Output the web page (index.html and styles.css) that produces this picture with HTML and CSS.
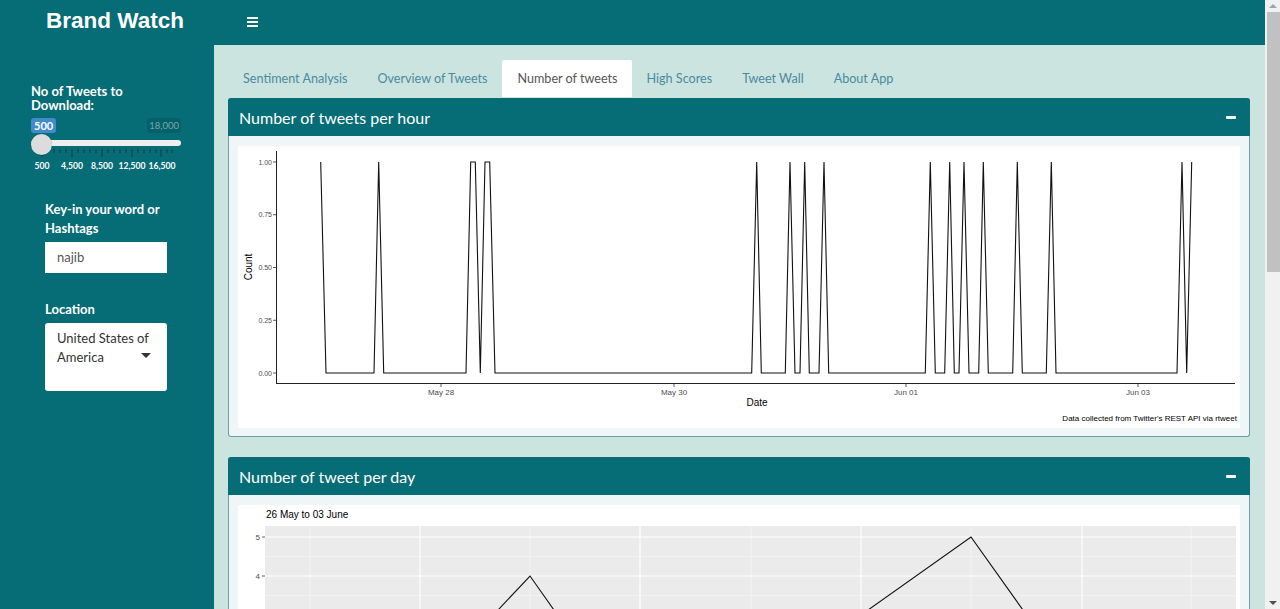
FILE: index.html
```html
<!DOCTYPE html>
<html lang="en">
<head>
<meta charset="utf-8">
<title>Brand Watch</title>
<link rel="stylesheet" href="styles.css">
</head>
<body>
<div class="window">
  <div class="page">
    <header class="topbar">
      <div class="logo">Brand Watch</div>
      <a class="sidebar-toggle" href="#">
        <svg width="11" height="10" viewBox="0 0 11 10"><rect x="0" y="0" width="11" height="2"/><rect x="0" y="4" width="11" height="2"/><rect x="0" y="8" width="11" height="2"/></svg>
      </a>
    </header>
    <div class="body-row">
      <aside class="sidebar">
        <div class="slider-group">
          <div class="ctl-label narrow">No of Tweets to Download:</div>
          <div class="irs">
            <div class="irs-labels">
              <span class="irs-from">500</span>
              <span class="irs-max">18,000</span>
            </div>
            <div class="irs-bar">
              <span class="irs-line"></span>
              <span class="irs-handle"></span>
            </div>
            <svg class="irs-grid" width="150" height="9" viewBox="0 0 150 9">
              <g class="major">
                <rect x="10.5" y="0" width="1" height="8"/><rect x="40.5" y="0" width="1" height="8"/><rect x="70.5" y="0" width="1" height="8"/><rect x="100.5" y="0" width="1" height="8"/><rect x="129.5" y="0" width="1" height="8"/>
              </g>
              <g class="minor">
                <rect x="16.5" y="0" width="1" height="4"/><rect x="22.5" y="0" width="1" height="4"/><rect x="28.5" y="0" width="1" height="4"/><rect x="34.5" y="0" width="1" height="4"/>
                <rect x="46.5" y="0" width="1" height="4"/><rect x="52.5" y="0" width="1" height="4"/><rect x="58.5" y="0" width="1" height="4"/><rect x="64.5" y="0" width="1" height="4"/>
                <rect x="76.5" y="0" width="1" height="4"/><rect x="82.5" y="0" width="1" height="4"/><rect x="88.5" y="0" width="1" height="4"/><rect x="94.5" y="0" width="1" height="4"/>
                <rect x="106.5" y="0" width="1" height="4"/><rect x="112.5" y="0" width="1" height="4"/><rect x="118.5" y="0" width="1" height="4"/><rect x="124.5" y="0" width="1" height="4"/>
                <rect x="135.5" y="0" width="1" height="4"/><rect x="140.5" y="0" width="1" height="4"/>
              </g>
            </svg>
            <div class="irs-grid-text">
              <span>500</span><span>4,500</span><span>8,500</span><span>12,500</span><span>16,500</span>
            </div>
          </div>
        </div>

        <div class="form-group word-group">
          <div class="ctl-label">Key-in your word or Hashtags</div>
          <div class="text-input">najib</div>
        </div>

        <div class="form-group location-group">
          <div class="ctl-label">Location</div>
          <div class="select-box">
            <span class="select-text">United States of America</span>
            <span class="caret"></span>
          </div>
        </div>
      </aside>

      <main class="content">
        <nav class="tabs">
          <a class="tab">Sentiment Analysis</a>
          <a class="tab">Overview of Tweets</a>
          <a class="tab active">Number of tweets</a>
          <a class="tab">High Scores</a>
          <a class="tab">Tweet Wall</a>
          <a class="tab">About App</a>
        </nav>

        <section class="box first">
          <div class="box-header">
            <h3 class="box-title">Number of tweets per hour</h3>
            <span class="box-tool"></span>
          </div>
          <div class="box-body">
            <div class="plot plot-hour">
              <svg width="1002" height="282" viewBox="0 0 1002 282" class="chart">
                <line x1="38.5" y1="5" x2="38.5" y2="237.5" class="axis"/>
                <line x1="38" y1="237.5" x2="997" y2="237.5" class="axis"/>
                <g class="yticks">
                  <line x1="35" y1="16" x2="38" y2="16"/><line x1="35" y1="68.75" x2="38" y2="68.75"/><line x1="35" y1="121.5" x2="38" y2="121.5"/><line x1="35" y1="174.25" x2="38" y2="174.25"/><line x1="35" y1="227" x2="38" y2="227"/>
                </g>
                <g class="ylabels">
                  <text x="34" y="18.5">1.00</text>
                  <text x="34" y="71.2">0.75</text>
                  <text x="34" y="124">0.50</text>
                  <text x="34" y="176.7">0.25</text>
                  <text x="34" y="229.5">0.00</text>
                </g>
                <g class="xticks">
                  <line x1="203" y1="238" x2="203" y2="241"/><line x1="436" y1="238" x2="436" y2="241"/><line x1="668" y1="238" x2="668" y2="241"/><line x1="900" y1="238" x2="900" y2="241"/>
                </g>
                <g class="xlabels">
                  <text x="203" y="248.5">May 28</text>
                  <text x="436" y="248.5">May 30</text>
                  <text x="668" y="248.5">Jun 01</text>
                  <text x="900" y="248.5">Jun 03</text>
                </g>
                <text class="axis-title" x="519" y="260">Date</text>
                <text class="axis-title" transform="translate(13.5 121) rotate(-90)">Count</text>
                <text class="caption" x="999" y="275">Data collected from Twitter's REST API via rtweet</text>
                <polyline class="series" points="82.7,16 88,227 136,227 140.7,16 145.7,227 228,227 232.7,16 237.3,16 242.3,227 247,16 251.7,16 257,227 513.7,227 518.7,16 523.3,227 547.3,227 552,16 557,227 562,227 566.7,16 571.3,227 581,227 586,16 590.7,227 687.3,227 692.3,16 697.3,227 706.7,227 711.7,16 716.3,227 721,227 726,16 731,227 740.7,227 745.3,16 750.3,227 774.7,227 779.3,16 784.3,227 808.3,227 813.3,16 818,227 939,227 944,16 948.7,227 953.7,16"/>
              </svg>
            </div>
          </div>
        </section>

        <section class="box second">
          <div class="box-header">
            <h3 class="box-title">Number of tweet per day</h3>
            <span class="box-tool"></span>
          </div>
          <div class="box-body">
            <div class="plot plot-day">
              <svg width="1002" height="300" viewBox="0 0 1002 300" class="chart">
                <text class="plot-title" x="28" y="13">26 May to 03 June</text>
                <rect x="27" y="21" width="971" height="260" class="panel"/>
                <g class="grid-minor">
                  <line x1="27" y1="51.5" x2="998" y2="51.5"/><line x1="27" y1="90.5" x2="998" y2="90.5"/><line x1="27" y1="129.5" x2="998" y2="129.5"/><line x1="27" y1="168.5" x2="998" y2="168.5"/>
                  <line x1="72" y1="21" x2="72" y2="281"/><line x1="292" y1="21" x2="292" y2="281"/><line x1="513" y1="21" x2="513" y2="281"/><line x1="733" y1="21" x2="733" y2="281"/><line x1="953" y1="21" x2="953" y2="281"/>
                </g>
                <g class="grid-major">
                  <line x1="27" y1="32" x2="998" y2="32"/><line x1="27" y1="71" x2="998" y2="71"/><line x1="27" y1="110" x2="998" y2="110"/><line x1="27" y1="149" x2="998" y2="149"/><line x1="27" y1="188" x2="998" y2="188"/>
                  <line x1="182" y1="21" x2="182" y2="281"/><line x1="402" y1="21" x2="402" y2="281"/><line x1="623" y1="21" x2="623" y2="281"/><line x1="844" y1="21" x2="844" y2="281"/>
                </g>
                <g class="yticks">
                  <line x1="24" y1="32" x2="27" y2="32"/><line x1="24" y1="71" x2="27" y2="71"/><line x1="24" y1="110" x2="27" y2="110"/><line x1="24" y1="149" x2="27" y2="149"/><line x1="24" y1="188" x2="27" y2="188"/>
                </g>
                <g class="ylabels">
                  <text x="22" y="35">5</text>
                  <text x="22" y="74">4</text>
                </g>
                <polyline class="series" points="72,149 182,188 292,71 402,227 513,188 623,110 733,32 844,188 953,149"/>
              </svg>
            </div>
          </div>
        </section>
      </main>
    </div>
  </div>
  <div class="scrollbar">
    <span class="sb-arrow up"></span>
    <span class="sb-thumb"></span>
    <span class="sb-track"></span>
    <span class="sb-arrow down"></span>
  </div>
</div>
</body>
</html>
```

FILE: styles.css
```css
* { box-sizing: border-box; }

html, body {
  margin: 0;
  height: 609px;
  overflow: hidden;
}

body {
  font-family: Lato, "Noto Sans", sans-serif;
  background: #cce4e0;
  color: #333;
}

.window {
  display: flex;
  height: 609px;
}

.page {
  flex: 1;
  min-width: 0;
  display: flex;
  flex-direction: column;
}

/* ---------- top bar ---------- */
.topbar {
  flex: none;
  height: 45px;
  background: #066c75;
  display: flex;
  align-items: center;
}

.logo {
  width: 230px;
  text-align: center;
  font-family: "Liberation Sans", Arial, sans-serif;
  font-weight: bold;
  font-size: 22.5px;
  color: #fff;
  padding-bottom: 3px;
}

.sidebar-toggle {
  display: flex;
  margin-left: 17px;
  margin-bottom: 2px;
}

.sidebar-toggle svg { fill: #fff; }

/* ---------- body row ---------- */
.body-row {
  flex: 1;
  display: flex;
  min-height: 0;
}

.sidebar {
  flex: none;
  width: 214px;
  background: #066c75;
  color: #fff;
}

.ctl-label {
  font-weight: bold;
  font-size: 13px;
  line-height: 19px;
  color: #fff;
}

.slider-group {
  margin-left: 31px;
  width: 150px;
  padding-top: 39px;
}

.slider-group .ctl-label {
  line-height: 14px;
  max-width: 122px;
}

/* slider */
.irs {
  margin-top: 6px;
  width: 150px;
}

.irs-labels {
  display: flex;
  justify-content: space-between;
  height: 15px;
}

.irs-from {
  background: #428bca;
  color: #fff;
  font-size: 11px;
  font-weight: bold;
  line-height: 15px;
  padding: 0 3px;
  border-radius: 3px;
}

.irs-max {
  background: rgba(0, 0, 0, 0.1);
  color: rgba(255, 255, 255, 0.45);
  font-size: 9.5px;
  line-height: 15px;
  padding: 0 2px;
  border-radius: 3px;
}

.irs-bar {
  position: relative;
  height: 16px;
  display: flex;
  align-items: center;
}

.irs-line {
  display: block;
  width: 100%;
  height: 6px;
  margin-top: 4px;
  border-radius: 3px;
  background: #eeeeee;
}

.irs-handle {
  position: absolute;
  left: 0;
  top: 1px;
  width: 21px;
  height: 21px;
  border-radius: 50%;
  background: #dcdcdc;
  box-shadow: 0 0 1px rgba(0, 0, 0, 0.3);
}

.irs-grid {
  display: block;
}

.irs-grid rect { fill: #1d3a3e; }

.irs-grid-text {
  display: grid;
  grid-template-columns: repeat(5, 30px);
  margin-left: -4px;
  margin-top: 3px;
}

.irs-grid-text span {
  display: flex;
  justify-content: center;
  font-size: 8.6px;
  font-weight: bold;
  line-height: 10px;
  color: #fff;
  white-space: nowrap;
}

/* inputs */
.form-group {
  margin-left: 45px;
  width: 122px;
}

.word-group { margin-top: 29px; }

.text-input {
  margin-top: 4px;
  height: 31px;
  background: #fff;
  color: #555;
  font-size: 13px;
  line-height: 31px;
  padding-left: 12px;
}

.location-group { margin-top: 27px; }

.select-box {
  margin-top: 4px;
  height: 68px;
  background: #fff;
  border-radius: 3px;
  padding: 6px 0 0 12px;
  position: relative;
}

.select-text {
  display: block;
  width: 96px;
  font-size: 13px;
  line-height: 19px;
  color: #333;
}

.caret {
  position: absolute;
  left: 96px;
  top: 30px;
  width: 0;
  height: 0;
  border-left: 5px solid transparent;
  border-right: 5px solid transparent;
  border-top: 5px solid #333;
}

/* ---------- content ---------- */
.content {
  flex: 1;
  min-width: 0;
  background: #cce4e0;
  padding: 15px 15px 0 14px;
}

.tabs {
  display: flex;
  height: 38px;
}

.tab {
  display: flex;
  align-items: center;
  padding: 0 15px;
  height: 37px;
  font-size: 12.6px;
  color: #4a8b9d;
  cursor: pointer;
}

.tab.active {
  background: #fff;
  color: #555;
  padding-right: 14px;
  border-radius: 2px 2px 0 0;
}

.box {
  background: #eef6f8;
  border: 1px solid #6f9ea8;
  border-top: 0;
  border-radius: 3px;
}

.box.second { margin-top: 20px; }

.box-header {
  height: 38px;
  background: #066c75;
  margin: 0 -1px;
  border-radius: 3px 3px 0 0;
  display: flex;
  align-items: center;
  justify-content: space-between;
  padding: 0 14px 0 11px;
}

.box-title {
  margin: 0;
  font-size: 16px;
  font-weight: normal;
  color: #fff;
}

.box-tool {
  width: 10px;
  height: 3px;
  background: #fff;
  border-radius: 1px;
}

.box-body {
  padding: 10px 9px 8px 9px;
}

.plot {
  background: #fff;
  line-height: 0;
}

.chart {
  display: block;
  font-family: "Liberation Sans", Arial, sans-serif;
}

.chart .axis { stroke: #222; stroke-width: 1; }
.chart .yticks line, .chart .xticks line { stroke: #333; stroke-width: 0.8; }

.chart .ylabels text {
  font-size: 7px;
  fill: #4d4d4d;
  text-anchor: end;
}

.chart .xlabels text {
  font-size: 8px;
  fill: #4d4d4d;
  text-anchor: middle;
}

.chart .axis-title {
  font-size: 10px;
  fill: #000;
  text-anchor: middle;
}

.chart .caption {
  font-size: 8px;
  fill: #000;
  text-anchor: end;
}

.chart .series {
  fill: none;
  stroke: #111;
  stroke-width: 1.1;
  stroke-linejoin: miter;
}

.plot-day .ylabels text { font-size: 8px; }

.chart .plot-title {
  font-size: 10px;
  fill: #000;
}

.chart .panel { fill: #ebebeb; }
.chart .grid-minor line { stroke: #f6f6f6; stroke-width: 0.6; }
.chart .grid-major line { stroke: #ffffff; stroke-width: 1.1; }

/* ---------- scrollbar ---------- */
.scrollbar {
  flex: none;
  width: 15px;
  background: #f1f1f1;
  display: flex;
  flex-direction: column;
  align-items: center;
}

.sb-arrow {
  flex: none;
  height: 12px;
  width: 100%;
  display: flex;
  align-items: center;
  justify-content: center;
}

.sb-arrow::before {
  content: "";
  border-left: 4px solid transparent;
  border-right: 4px solid transparent;
}

.sb-arrow.up::before { border-bottom: 4px solid #a3a3a3; }
.sb-arrow.down::before { border-top: 4px solid #505050; }

.sb-thumb {
  flex: none;
  height: 260px;
  width: 13px;
  background: #c1c1c1;
  margin-left: 1px;
}

.sb-track { flex: 1; }
```
